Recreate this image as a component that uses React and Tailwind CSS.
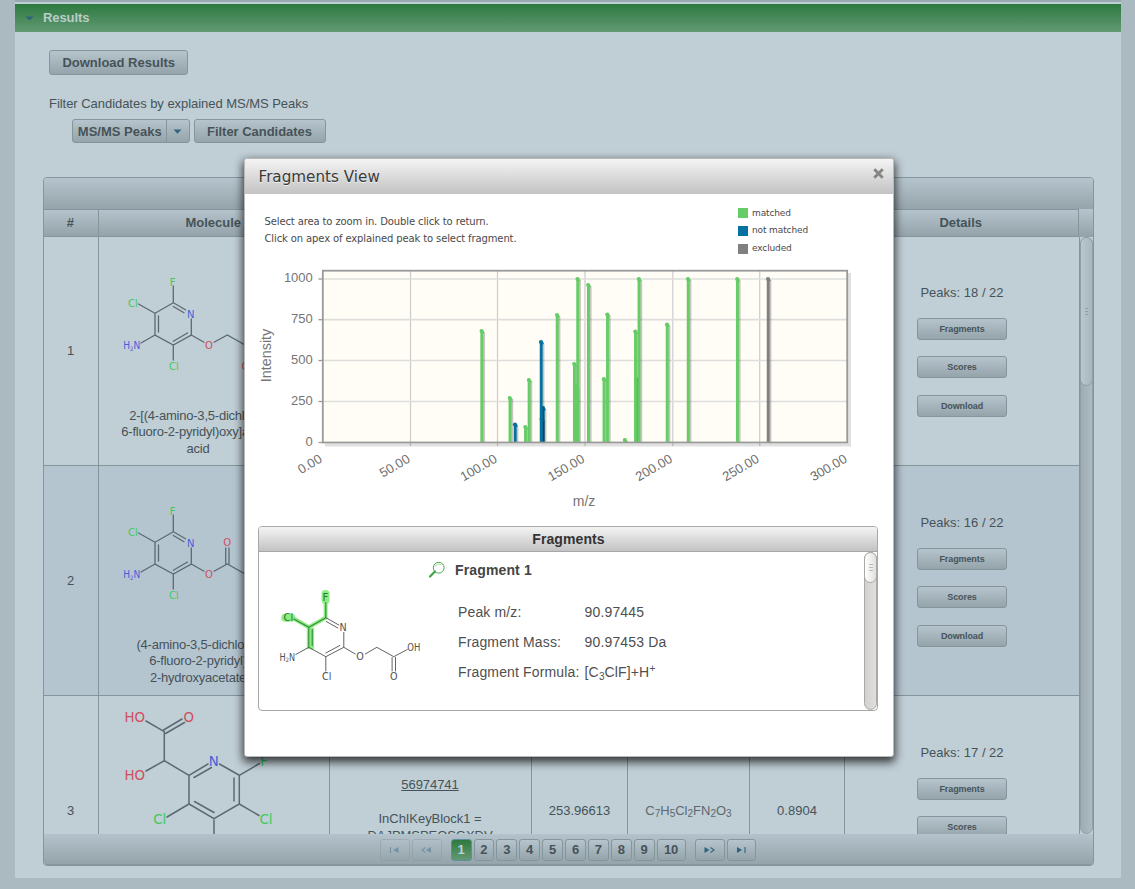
import React from "react";

const btn =
  "box-border flex items-center justify-center rounded-[3px] border border-[#84959c] bg-gradient-to-b from-[#b6c5cd] to-[#95a4ab] font-bold text-[#465359]";

function Lines({ d, stroke = "#5b6a72", w = 1.3 }) {
  return <path d={d} fill="none" stroke={stroke} strokeWidth={w} strokeLinecap="round" />;
}

function Atom({ x, y, fill, size = 10, children }) {
  return (
    <text x={x} y={y + size * 0.36} fontSize={size} fill={fill} textAnchor="middle" fontFamily="DejaVu Sans, sans-serif">
      {children}
    </text>
  );
}

const GREEN = "#3fca5c";
const BLUE = "#465fd8";
const RED = "#cf4f60";

function PyridineRing() {
  return (
    <>
      <Lines d="M173.3 286V302.7L185.5 309.8M173.3 306.5L184 312.7M191.3 319V335L173.3 345L155 335V313.3L173.3 302.7M158.5 332V316M187.5 333L173.3 341.2M138.5 304L155 313.3M141 343L155 335M173.3 345V360M191.3 335L204 342.3M214 342.3L227.3 335L246 345.5" />
      <Atom x={172.7} y={282} fill={GREEN}>F</Atom>
      <Atom x={133} y={303.3} fill={GREEN}>Cl</Atom>
      <Atom x={174} y={366} fill={GREEN}>Cl</Atom>
      <Atom x={190.7} y={314} fill={BLUE}>N</Atom>
      <text x="123.2" y="349" fontSize="10" fill={BLUE} fontFamily="DejaVu Sans, sans-serif" textLength="17" lengthAdjust="spacingAndGlyphs">
        H<tspan fontSize="6" dy="1.5">2</tspan><tspan dy="-1.5">N</tspan>
      </text>
      <Atom x={209} y={345} fill={RED}>O</Atom>
    </>
  );
}

function MoleculeOne() {
  return (
    <svg className="block h-[160px] w-[230px] shrink-0" viewBox="99 237 230 160">
      <PyridineRing />
      <Atom x={245.5} y={366} fill={RED}>O</Atom>
    </svg>
  );
}

function MoleculeTwo() {
  return (
    <svg className="block h-[160px] w-[230px] shrink-0" viewBox="99 237 230 160">
      <PyridineRing />
      <Lines d="M225.7 335V319M229 335V319" />
      <Atom x={227.3} y={313.5} fill={RED}>O</Atom>
    </svg>
  );
}

function MoleculeThree() {
  return (
    <svg className="block h-[139px] w-[230px] shrink-0" viewBox="99 696 230 139">
      <Lines d="M146 721L164.3 731.7V760.7L146 771M163.5 730L182 719M165.5 733.5L184.5 722.5M164.3 760.7L189 775.3L208 764M194 777.5L211.5 767.5M219.5 764L239.3 775.3V804L214 818.7L189 804V775.3M234 778V801M194.5 801.5L214 812.5M239.3 775.3L259.5 763.5M239.3 804L259 815.5M189 804L167 817M214 818.7V836" w={1.5} />
      <Atom x={134.7} y={717.3} fill={RED} size={13.4}>HO</Atom>
      <Atom x={188.7} y={717} fill={RED} size={13.4}>O</Atom>
      <Atom x={134.7} y={775.3} fill={RED} size={13.4}>HO</Atom>
      <Atom x={213.7} y={760.7} fill={BLUE} size={13.4}>N</Atom>
      <Atom x={264} y={761} fill={GREEN} size={13.4}>F</Atom>
      <Atom x={159.7} y={819} fill={GREEN} size={13.4}>Cl</Atom>
      <Atom x={266} y={819} fill={GREEN} size={13.4}>Cl</Atom>
    </svg>
  );
}

function FragmentMolecule() {
  const c = "#505050";
  return (
    <svg className="block h-[100px] w-[160px]" viewBox="273.2 585 160 100">
      <path d="M325.8 601V617.7L309 627.3V647.3M309 627.3L294 618.5M312.3 629V648" fill="none" stroke="#8fec85" strokeWidth="4" strokeLinecap="round" strokeLinejoin="round" />
      <path d="M325.7 594V600M285.5 617.7H291.5" fill="none" stroke="#8fec85" strokeWidth="8" strokeLinecap="round" />
      <Lines stroke={c} w={0.9} d="M344 632.5V647.3L326 656.7L309 647.3L296 654.5M326 656.7V671M340 645.5L326 653M344 647.3L355.5 654M365.5 654L377 647.3L394 656.7L407.5 649.5M392.3 657.5V671M395.7 657.5V671M326 617.7L339 625M326.5 621.5L338 628" />
      <Lines stroke="#2f8a35" w={1.1} d="M326 602.5V617.7L309 627.3V647.3M312.4 629.5V645.5M294 619L309 627.3" />
      <Atom x={325.7} y={597.3} fill="#257a2c" size={10}>F</Atom>
      <Atom x={288.6} y={617.7} fill="#257a2c" size={10}>Cl</Atom>
      <Atom x={343.3} y={627.5} fill={c} size={9.6}>N</Atom>
      <Atom x={327} y={676.3} fill={c} size={9.6}>Cl</Atom>
      <Atom x={360.3} y={657} fill={c} size={9.6}>O</Atom>
      <Atom x={394} y={676.3} fill={c} size={9.6}>O</Atom>
      <text x="407.5" y="650.5" fontSize="9.6" fill={c} fontFamily="DejaVu Sans, sans-serif" textLength="13" lengthAdjust="spacingAndGlyphs">OH</text>
      <text x="279.7" y="660.7" fontSize="9.6" fill={c} fontFamily="DejaVu Sans, sans-serif" textLength="15.5" lengthAdjust="spacingAndGlyphs">
        H<tspan fontSize="6" dy="1.5">2</tspan><tspan dy="-1.5">N</tspan>
      </text>
    </svg>
  );
}

const M = "#66cc66";
const U = "#0571a0";
const X = "#808080";
const peaks = [
  [481.6, 331, M], [509.8, 398, M], [515, 424.5, U], [525.3, 427, M], [528.9, 380, M],
  [543, 408, U], [541.6, 419, U], [541, 342, U], [557, 315, M], [574.2, 364, M], [576, 386, M], [577.5, 279, M],
  [588.2, 285, M], [603.8, 379, M], [607.3, 314.5, M], [624.8, 440, M], [636, 379, M], [635.3, 331.5, M],
  [638.8, 279, M], [667, 324.5, M], [688, 279, M], [737.2, 279, M], [768, 279, X],
];
const xTicks = [[322.5, "0.00"], [410.5, "50.00"], [497.5, "100.00"], [585, "150.00"], [672.8, "200.00"], [759.7, "250.00"], [847.5, "300.00"]];
const yTicks = [[279, "1000"], [319.7, "750"], [360.5, "500"], [401.5, "250"], [442.5, "0"]];

function Spectrum() {
  return (
    <svg className="block h-[252px] w-full shrink-0" viewBox="245 260 648 252" fontFamily="Liberation Sans, sans-serif">
      <rect x="322" y="270" width="526" height="173" fill="#fffdf6" />
      {xTicks.slice(1, 6).map(([x]) => (
        <path key={x} d={`M${x} 271V446`} stroke="#cccccc" strokeWidth="1.2" />
      ))}
      {yTicks.slice(0, 4).map(([y]) => (
        <path key={y} d={`M323 ${y}H847`} stroke="#dededc" strokeWidth="1.7" />
      ))}
      <path d="M849.5 273V445H325" fill="none" stroke="#000" strokeOpacity="0.12" strokeWidth="3" />
      {peaks.map(([x, y, color], i) => (
        <g key={i}>
          <path d={`M${x + 2.1} ${y + 2}V442`} stroke="#000" strokeOpacity="0.22" strokeWidth="2.6" strokeLinecap="round" />
          <path d={`M${x + 0.2} ${y}V442`} stroke={color} strokeWidth="2.9" />
          <circle cx={x} cy={y} r="2.1" fill={color} />
          <circle cx={x + 1.3} cy={y + 1.2} r="1.3" fill={color} />
        </g>
      ))}
      <rect x="322.8" y="270.7" width="524.4" height="171.8" fill="none" stroke="#999" strokeWidth="1.8" />
      {yTicks.map(([y, label]) => (
        <g key={label}>
          <path d={`M318.5 ${y}H322`} stroke="#999" strokeWidth="1.3" />
          <text x="312.8" y={y + 3.2} fontSize="13" fill="#757575" textAnchor="end">{label}</text>
        </g>
      ))}
      {xTicks.map(([x, label]) => (
        <text key={label} transform={`translate(${x + 0.4} 461.5) rotate(-30)`} fontSize="13" fill="#6c6c6c" textAnchor="end">{label}</text>
      ))}
      <text x="584" y="505.5" fontSize="14" fill="#757575" textAnchor="middle">m/z</text>
      <text transform="translate(270.5 355.5) rotate(-90)" fontSize="14.4" fill="#757575" textAnchor="middle">Intensity</text>
    </svg>
  );
}

function Details({ peaks: n, actions, pad }) {
  return (
    <div className={"flex w-[235px] shrink-0 flex-col items-center border-r border-[#84959c] " + pad}>
      <div className="h-[16px] text-[13px] leading-[16px]">Peaks: {n} / 22</div>
      {actions.map((label) => (
        <div key={label} className="pt-[16.7px]">
          <button className={btn + " h-[22px] w-[90px] pt-px text-[9px] leading-none tracking-[-0.1px]"}>{label}</button>
        </div>
      ))}
    </div>
  );
}

const cell = "shrink-0 border-r border-[#84959c] flex flex-col items-center justify-center";

function Row({ n, tone, height, molecule, name, children }) {
  return (
    <div className={"flex w-[1036px] shrink-0 overflow-hidden border-b border-[#84959c] text-[13px] leading-[16px] " + tone + " " + height}>
      <div className={cell + " w-[55px] pr-px"}>{n}</div>
      <div className="flex w-[231px] shrink-0 flex-col border-r border-[#84959c]">
        {molecule}
        {name && <div className="w-[198px] whitespace-pre pt-[11px] text-center leading-[16.3px] tracking-[-0.22px]">{name}</div>}
      </div>
      {children}
    </div>
  );
}

const columns = [["#", "w-[55px]"], ["Molecule", "w-[231px]"], ["", "w-[202px]"], ["", "w-[96px]"], ["", "w-[122px]"], ["", "w-[95px]"], ["Details", "w-[234px]"]];

function EmptyCells() {
  return (
    <>
      <div className={cell + " w-[202px]"} />
      <div className={cell + " w-[96px]"} />
      <div className={cell + " w-[122px]"} />
      <div className={cell + " w-[95px]"} />
    </>
  );
}

function PageIcon({ kind }) {
  const solid = {
    first: "M9.5 0L4 3L9.5 6Z",
    prev: "M10 0L5 3L10 6Z",
    next: "M0.5 0L5.5 3L0.5 6Z",
    last: "M1 0L6 3L1 6Z",
  };
  const open = {
    first: "M1.5 0V6",
    prev: "M4.5 0.5L0.8 3L4.5 5.5",
    next: "M6.5 0.5L10.2 3L6.5 5.5",
    last: "M9 0V6",
  };
  return (
    <svg className="h-[6px] w-[11px]" viewBox="0 0 11 6">
      <path d={solid[kind]} fill="#2f647f" />
      <path d={open[kind]} fill="none" stroke="#2f647f" strokeWidth="1.1" />
    </svg>
  );
}

function Paginator() {
  return (
    <div className="flex h-[31px] shrink-0 items-center rounded-b-[3px] border-b border-[#84959c] bg-gradient-to-b from-[#b4c3cb] to-[#95a4ab] pl-[335.5px] pt-[1.5px]">
      <div className="flex gap-[2px]">
        <span className={btn + " h-[22px] w-[30px] opacity-40"}><PageIcon kind="first" /></span>
        <span className={btn + " h-[22px] w-[30px] opacity-40"}><PageIcon kind="prev" /></span>
      </div>
      <div className="ml-[9px] flex gap-[2px]">
        {[1, 2, 3, 4, 5, 6, 7, 8, 9, 10].map((p) => (
          <span
            key={p}
            className={
              p === 1
                ? "flex h-[22px] w-[21px] items-center justify-center rounded-[3px] border border-[#5d9199] bg-gradient-to-b from-[#2c7a40] to-[#629973] text-[13px] font-bold text-[#c0ced5]"
                : btn + " h-[22px] text-[13px] " + (p === 10 ? "w-[29px]" : "w-[20.9px]")
            }
          >
            {p}
          </span>
        ))}
      </div>
      <div className="ml-[9px] flex gap-[2px]">
        <span className={btn + " h-[22px] w-[30px]"}><PageIcon kind="next" /></span>
        <span className={btn + " h-[22px] w-[29px]"}><PageIcon kind="last" /></span>
      </div>
    </div>
  );
}

const actions = ["Fragments", "Scores", "Download"];

function ResultsTable() {
  return (
    <div className="ml-[28px] mt-[34px] flex h-[689px] w-[1051px] flex-col overflow-hidden rounded-[4px] border border-[#84959c]">
      <div className="h-[31px] shrink-0 bg-gradient-to-b from-[#b6c5cd] to-[#95a4ab]" />
      <div className="flex h-[28px] shrink-0 bg-gradient-to-b from-[#b6c5cd] to-[#93a2a9]">
        <div className="flex border-y border-[#84959c]">
          {columns.map(([label, w], i) => (
            <div key={i} className={"flex items-center justify-center border-r border-[#84959c] pb-px pr-[1.5px] text-[13px] font-bold text-[#465359] " + w}>{label}</div>
          ))}
        </div>
      </div>
      <div className="flex h-[597px] shrink-0">
        <div className="h-full w-[1036px] shrink-0 overflow-hidden">
          <Row n="1" tone="bg-[#c0ced5]" height="h-[229px]" molecule={<MoleculeOne />} name={"2-[(4-amino-3,5-dichloro-\n6-fluoro-2-pyridyl)oxy]acetic\nacid"}>
            <EmptyCells />
            <Details peaks={18} actions={actions} pad="pt-[48px]" />
          </Row>
          <Row n="2" tone="bg-[#b5c5d0]" height="h-[230px]" molecule={<MoleculeTwo />} name={"(4-amino-3,5-dichloro-\n6-fluoro-2-pyridyl)\n2-hydroxyacetate"}>
            <EmptyCells />
            <Details peaks={16} actions={actions} pad="pt-[49px]" />
          </Row>
          <Row n="3" tone="bg-[#c0ced5]" height="h-[230px]" molecule={<MoleculeThree />}>
            <div className="flex w-[202px] shrink-0 flex-col items-center border-r border-[#84959c] pr-px pt-[81px] tracking-[-0.05px]">
              <span className="underline">56974741</span>
              <span className="pt-[18px]">InChIKeyBlock1 =</span>
              <span className="pt-px">DAJPMSPEOSGXDV</span>
            </div>
            <div className={cell + " w-[96px]"}>253.96613</div>
            <div className={cell + " w-[122px]"}>
              <span className="text-[#5b6a72]">C<sub className="text-[10px]">7</sub>H<sub className="text-[10px]">5</sub>Cl<sub className="text-[10px]">2</sub>FN<sub className="text-[10px]">2</sub>O<sub className="text-[10px]">3</sub></span>
            </div>
            <div className={cell + " w-[95px]"}>0.8904</div>
            <Details peaks={17} actions={actions.slice(0, 2)} pad="pt-[49px]" />
          </Row>
        </div>
        <div className="h-full w-[13px] rounded-b-[7px] rounded-t-[7px] border border-[#8f9fa6] bg-gradient-to-r from-[#9eacb3] to-[#aebac2]">
          <div className="-ml-px -mt-px flex h-[149px] w-[13px] flex-col items-center justify-center gap-[2px] rounded-[7px] border border-[#8f9fa6] bg-gradient-to-r from-[#bac7cf] to-[#a9b6be]">
            <div className="h-px w-[3px] bg-[#8f9fa6]" /><div className="h-px w-[3px] bg-[#8f9fa6]" /><div className="h-px w-[3px] bg-[#8f9fa6]" />
          </div>
        </div>
      </div>
      <Paginator />
    </div>
  );
}

function Dialog() {
  return (
    <div className="absolute left-[244px] top-[158px] flex h-[599px] w-[650px] flex-col overflow-hidden rounded-[3px] border border-[#b9b9b9] bg-white shadow-[0_4px_10px_1px_rgba(0,0,0,0.75)]">
      <div className="flex h-[35px] shrink-0 items-center justify-between bg-gradient-to-b from-[#f4f4f4] to-[#c3c3c3] pl-[13.5px] pr-[9px]">
        <span className="pt-[2px] font-['DejaVu_Sans',sans-serif] text-[15.2px] text-[#3a3a3a] [text-shadow:0_1px_0_rgba(255,255,255,0.7)]">Fragments View</span>
        <svg className="mb-[6px] h-[11px] w-[11px]" viewBox="0 0 11 11"><path d="M2.3 2.3L8.7 8.7M8.7 2.3L2.3 8.7" stroke="#858585" strokeWidth="2.9" strokeLinecap="square" /></svg>
      </div>
      <div className="flex h-[66px] shrink-0 font-['DejaVu_Sans',sans-serif] text-[#4a4a4a]">
        <div className="w-[493px] pl-[19.5px] pt-[20px] text-[10px] leading-[16.5px] tracking-[-0.12px]">
          <div>Select area to zoom in. Double click to return.</div>
          <div>Click on apex of explained peak to select fragment.</div>
        </div>
        <div className="pt-[10.6px] text-[9px] tracking-[-0.12px]">
          {[["matched", "bg-[#66cc66]"], ["not matched", "bg-[#0571a0]"], ["excluded", "bg-[#808080]"]].map(([label, color]) => (
            <div key={label} className="flex h-[17.7px] items-center gap-[4px]">
              <span className={"h-[10px] w-[10px] " + color} />{label}
            </div>
          ))}
        </div>
      </div>
      <Spectrum />
      <div className="ml-[13px] mt-[14px] flex h-[185px] w-[620px] shrink-0 flex-col overflow-hidden rounded-[4px] border border-[#a8a8a8]">
        <div className="flex h-[25px] shrink-0 items-center justify-center border-b border-[#a8a8a8] bg-gradient-to-b from-[#f4f4f4] to-[#c3c3c3] pl-px text-[14px] font-bold tracking-[0.08px] text-[#333]">Fragments</div>
        <div className="flex h-[158px]">
          <div className="w-[167px] shrink-0 pl-[14px] pt-[33px]"><FragmentMolecule /></div>
          <div className="w-[438px] text-[14px] tracking-[0.14px] text-[#4f4f4f]">
            <div className="flex h-[36px] items-center gap-[9px] pl-[2px]">
              <svg className="h-[18px] w-[18px]" viewBox="0 0 18 18" fill="none">
                <circle cx="10.7" cy="6.7" r="5.4" stroke="#48a94f" strokeWidth="1" />
                <path d="M6.9 5.8A4.2 4.2 0 0 1 13.2 3.8" stroke="#8fd096" strokeWidth="0.8" />
                <path d="M7 10.5L2 15.5" stroke="#3aa544" strokeWidth="2.2" strokeLinecap="round" />
              </svg>
              <b className="text-[#444]">Fragment 1</b>
            </div>
            <div className="grid grid-cols-[126.6px_1fr] grid-rows-[30px_29px_31px] pl-[32px] pt-[9px] leading-[30px]">
              <span className="whitespace-nowrap">Peak m/z:</span><span>90.97445</span>
              <span className="whitespace-nowrap">Fragment Mass:</span><span>90.97453 Da</span>
              <span className="whitespace-nowrap pt-px">Fragment Formula:</span>
              <span className="whitespace-nowrap pt-px">[C<sub className="text-[10px] leading-none">3</sub>ClF]+H<sup className="text-[10px] leading-none">+</sup></span>
            </div>
          </div>
          <div className="h-[158px] w-[13px] shrink-0 rounded-[7px] border border-[#aaa9a5] bg-gradient-to-r from-[#d2d1cf] to-[#e0dfde]">
            <div className="-ml-px -mt-px flex h-[31px] w-[13px] flex-col items-center justify-center gap-[2px] rounded-[7px] border border-[#aaa9a5] bg-gradient-to-r from-white to-[#e2e1df]">
              <div className="h-px w-[4px] bg-[#bbb]" /><div className="h-px w-[4px] bg-[#bbb]" /><div className="h-px w-[4px] bg-[#bbb]" />
            </div>
          </div>
        </div>
      </div>
    </div>
  );
}

export default function App() {
  return (
    <div className="relative h-[889px] w-[1135px] overflow-hidden bg-[#abb9c0] font-['Liberation_Sans',Arial,sans-serif] text-[#465359]">
      <div className="ml-[15px] h-[878px] w-[1106px] bg-[#c0ced5]">
        <div className="h-[2px] bg-[#99a9b0]" />
        <div className="mt-[2px] flex h-[28px] items-center bg-gradient-to-b from-[#2c7a40] to-[#629973]">
          <svg className="ml-[10px] h-[5px] w-[9px]" viewBox="0 0 9 5"><path d="M0.5 0.5H8.5L4.5 4.5Z" fill="#2f647f" /></svg>
          <span className="pl-[9px] text-[13px] font-bold tracking-[-0.08px] text-[#b9cdc9]">Results</span>
        </div>
        <div className="pl-[34px] pt-[18px]">
          <button className={btn + " h-[25px] w-[138.5px] pl-px text-[13px]"}>Download Results</button>
        </div>
        <div className="pl-[34px] pt-[20px] text-[13px] leading-[18px] tracking-[-0.04px]">Filter Candidates by explained MS/MS Peaks</div>
        <div className="flex gap-[4px] pl-[57px] pt-[6px]">
          <div className={btn + " h-[24px] w-[117.5px] text-[13px]"}>
            <span className="flex h-full flex-1 items-center justify-center border-r border-[#84959c] pl-px pt-[2px]">MS/MS Peaks</span>
            <span className="flex w-[22px] justify-center">
              <svg className="h-[5px] w-[9px]" viewBox="0 0 9 5"><path d="M0.5 0.5H8.5L4.5 4.7Z" fill="#2f647f" /></svg>
            </span>
          </div>
          <button className={btn + " h-[24px] w-[132px] pt-[2px] text-[13px] tracking-[-0.03px]"}>Filter Candidates</button>
        </div>
        <ResultsTable />
      </div>
      <Dialog />
    </div>
  );
}
